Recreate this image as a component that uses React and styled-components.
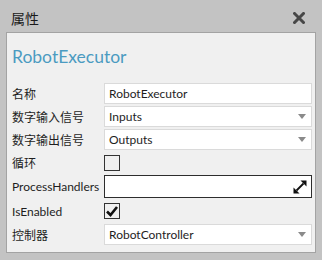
import React from "react";
import styled, { createGlobalStyle } from "styled-components";

const Global = createGlobalStyle`
  html, body { margin: 0; padding: 0; }
  body {
    background: #c3c3c3;
    font-family: Lato, "Noto Sans CJK SC", sans-serif;
    color: #1e1e1e;
  }
`;

const Window = styled.div`
  width: 322px;
  height: 260px;
  background: #c3c3c3;
  display: flex;
  flex-direction: column;
`;

const TitleBar = styled.div`
  height: 32px;
  display: flex;
  align-items: center;
  justify-content: space-between;
  padding: 0 17px 0 11px;
  box-sizing: border-box;
`;

const Title = styled.span`
  font-size: 14px;
  font-family: "Noto Sans CJK SC", sans-serif;
  color: #1a1a1a;
  margin-top: 4px;
`;

const CloseButton = styled.button`
  border: 0;
  background: transparent;
  padding: 0;
  width: 12px;
  height: 12px;
  display: flex;
  margin-top: 4px;
`;

const Panel = styled.div`
  margin: 0 6px;
  height: 221px;
  box-sizing: border-box;
  border: 1px solid #a3a3a3;
  background: #f0f0f0;
  padding: 12px 3px 0 5px;
`;

const Heading = styled.div`
  font-family: Lato, sans-serif;
  font-size: 17.5px;
  line-height: 24px;
  color: #4b9bc1;
  height: 38px;
`;

const Rows = styled.div`
  display: flex;
  flex-direction: column;
  gap: 2px;
`;

const Row = styled.div`
  display: grid;
  grid-template-columns: 92px 1fr;
  align-items: center;
  height: ${(p) => p.$h}px;
`;

const Label = styled.span`
  font-size: 12px;
  font-family: Lato, "Noto Sans CJK SC", sans-serif;
  color: #1e1e1e;
  white-space: nowrap;
`;

const Field = styled.div`
  height: 100%;
  box-sizing: border-box;
  background: #fff;
  border: 1px solid ${(p) => (p.$dark ? "#2d2d2d" : "#dadada")};
  display: flex;
  align-items: center;
  justify-content: space-between;
  padding: 0 4px 0 4px;
  font-size: 12px;
  color: #1e1e1e;
`;

const Arrow = styled.span`
  width: 0;
  height: 0;
  border-left: 4px solid transparent;
  border-right: 4px solid transparent;
  border-top: 5px solid #8a8a8a;
  margin-right: 1px;
`;

const Check = styled.span`
  width: 16px;
  height: 16px;
  box-sizing: border-box;
  border: 1px solid #333;
  display: flex;
  align-items: center;
  justify-content: center;
`;

const Expand = () => (
  <svg width="14" height="14" viewBox="0 0 14 14">
    <line x1="3.5" y1="10.5" x2="10.5" y2="3.5" stroke="#111" strokeWidth="1.8" />
    <polygon points="13.5,0.5 13.5,6.5 7.5,0.5" fill="#111" />
    <polygon points="0.5,13.5 0.5,7.5 6.5,13.5" fill="#111" />
  </svg>
);

const Select = ({ value }) => (
  <Field>
    <span>{value}</span>
    <Arrow />
  </Field>
);

export default function App() {
  return (
    <Window>
      <Global />
      <TitleBar>
        <Title>属性</Title>
        <CloseButton aria-label="close">
          <svg width="12" height="12" viewBox="0 0 12 12">
            <path d="M1.5 1.5 L10.5 10.5 M10.5 1.5 L1.5 10.5" stroke="#474747" strokeWidth="3" strokeLinecap="square" />
          </svg>
        </CloseButton>
      </TitleBar>
      <Panel>
        <Heading>RobotExecutor</Heading>
        <Rows>
          <Row $h={21}>
            <Label>名称</Label>
            <Field>RobotExecutor</Field>
          </Row>
          <Row $h={21}>
            <Label>数字输入信号</Label>
            <Select value="Inputs" />
          </Row>
          <Row $h={21}>
            <Label>数字输出信号</Label>
            <Select value="Outputs" />
          </Row>
          <Row $h={21}>
            <Label>循环</Label>
            <Check />
          </Row>
          <Row $h={23}>
            <Label>ProcessHandlers</Label>
            <Field $dark>
              <span />
              <Expand />
            </Field>
          </Row>
          <Row $h={22}>
            <Label>IsEnabled</Label>
            <Check>
              <svg width="14" height="14" viewBox="0 0 14 14">
                <path d="M2 7.5 L5.5 11 L12 3" stroke="#111" strokeWidth="2.6" fill="none" />
              </svg>
            </Check>
          </Row>
          <Row $h={21}>
            <Label>控制器</Label>
            <Select value="RobotController" />
          </Row>
        </Rows>
      </Panel>
    </Window>
  );
}
